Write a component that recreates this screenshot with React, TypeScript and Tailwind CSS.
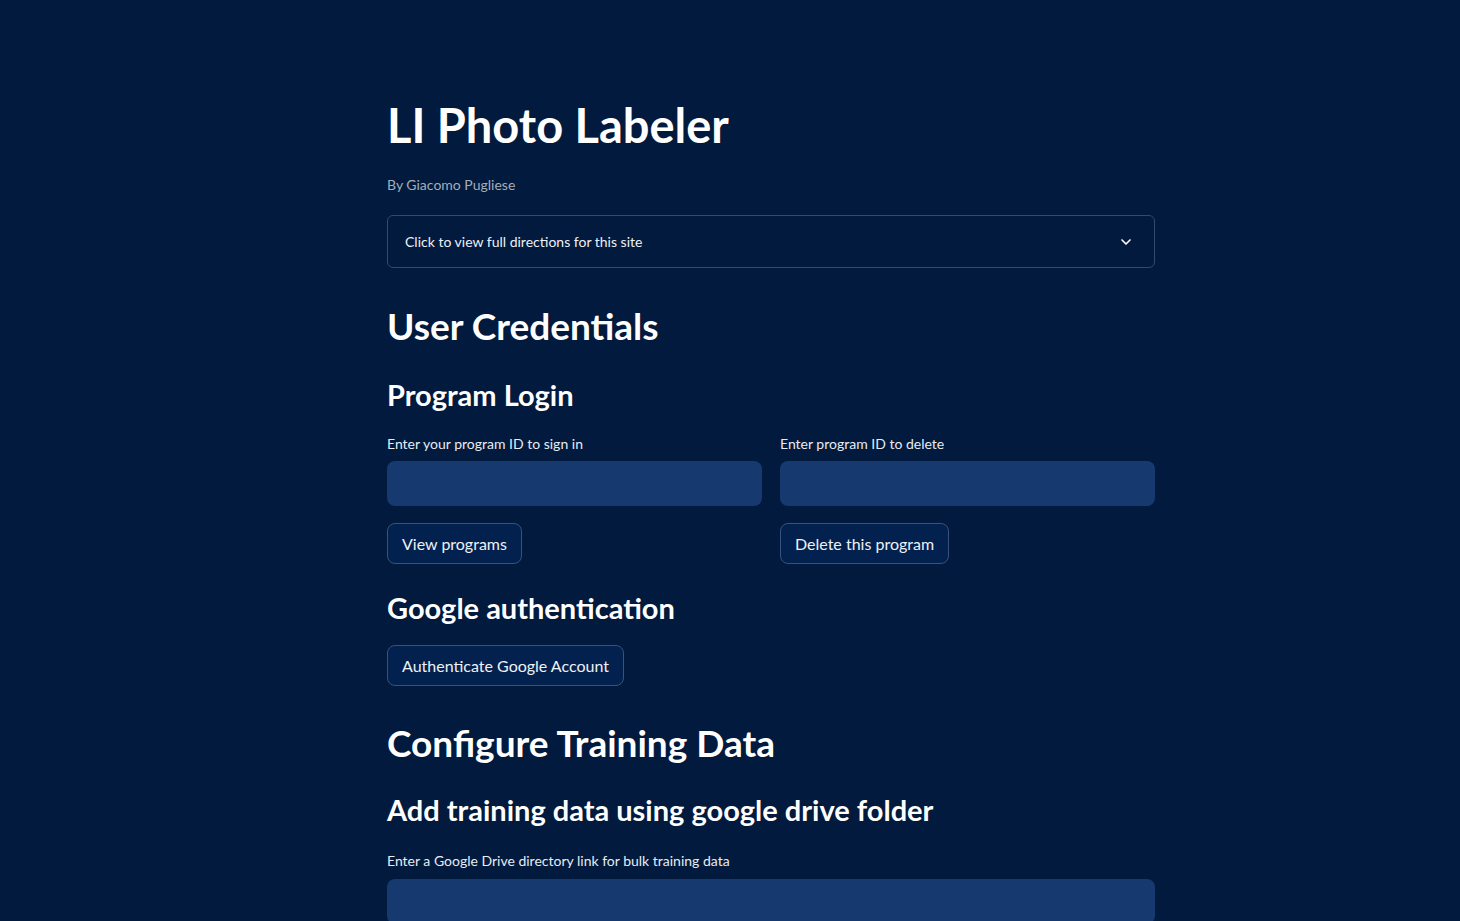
import { ChevronDown } from "lucide-react";

const font = { fontFamily: "Lato, 'Noto Sans', sans-serif" };

function TextField({ label, gap = "mt-[7px]" }: { label: string; gap?: string }) {
  return (
    <div className="flex flex-col">
      <label className="text-[14px] leading-[20px] text-[#e8ecf2]">{label}</label>
      <div className={`${gap} h-[45px] rounded-lg bg-[#163a6f]`} />
    </div>
  );
}

function Button({ children }: { children: string }) {
  return (
    <button className="h-[41px] rounded-lg border border-[#3a5278] bg-[#03214f] px-[14px] text-[16px] text-[#eef1f6]">
      {children}
    </button>
  );
}

export default function App() {
  return (
    <div className="min-h-screen bg-[#011a3d] text-white" style={font}>
      <div className="ml-[387px] w-[768px] pt-[95px] pb-10">
        <h1 className="text-[47px] font-bold leading-[60px]">LI Photo Labeler</h1>
        <p className="mt-[20px] text-[14px] leading-[20px] text-[#a5adba]">By Giacomo Pugliese</p>

        <div className="mt-[20px] flex h-[53px] items-center justify-between rounded-md border border-[#34496b] px-[17px]">
          <span className="text-[14px] text-[#eef1f6]">Click to view full directions for this site</span>
          <ChevronDown className="mr-[3px] h-4 w-4" strokeWidth={2.5} />
        </div>

        <h2 className="mt-[34px] text-[37px] font-bold leading-[48px]">User Credentials</h2>
        <h3 className="mt-[25px] text-[29px] font-bold leading-[40px]">Program Login</h3>

        <div className="mt-[19px] grid grid-cols-2 gap-x-[18px]">
          <div className="flex flex-col items-start">
            <div className="w-full">
              <TextField label="Enter your program ID to sign in" />
            </div>
            <div className="mt-[17px]">
              <Button>View programs</Button>
            </div>
          </div>
          <div className="flex flex-col items-start">
            <div className="w-full">
              <TextField label="Enter program ID to delete" />
            </div>
            <div className="mt-[17px]">
              <Button>Delete this program</Button>
            </div>
          </div>
        </div>

        <h3 className="mt-[24px] text-[29px] font-bold leading-[40px]">Google authentication</h3>
        <div className="mt-[17px]">
          <Button>Authenticate Google Account</Button>
        </div>

        <h2 className="mt-[33px] text-[37px] font-bold leading-[48px]">Configure Training Data</h2>
        <h3 className="mt-[23px] text-[29px] font-bold leading-[40px]">Add training data using google drive folder</h3>

        <div className="mt-[21px]">
          <TextField label="Enter a Google Drive directory link for bulk training data" gap="mt-[8px]" />
        </div>
      </div>
    </div>
  );
}
